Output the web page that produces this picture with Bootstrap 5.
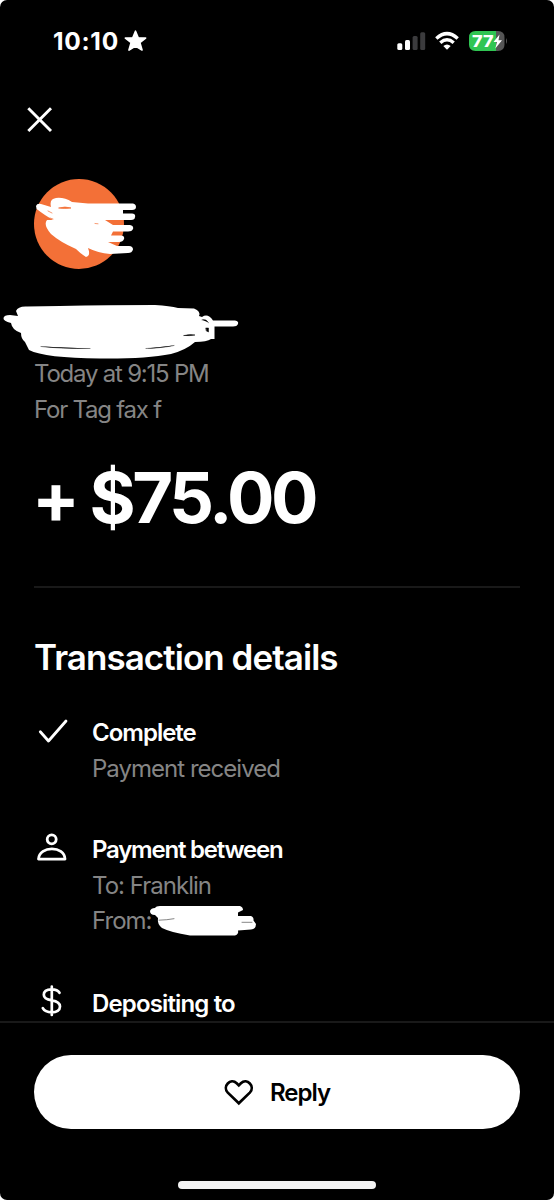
<!DOCTYPE html>
<html lang="en" data-bs-theme="dark">
<head>
<meta charset="utf-8">
<meta name="viewport" content="width=device-width, initial-scale=1">
<title>Transaction details</title>
<link href="https://cdn.jsdelivr.net/npm/bootstrap@5.3.0/dist/css/bootstrap.min.css" rel="stylesheet">
<style>
html{background:#fff;overflow:hidden}
body{background:#fff;margin:0;font-family:Inter,"Liberation Sans",sans-serif;color:#fff}
svg{display:block;overflow:visible;flex:none}
.phone{width:554px;height:1200px;background:#000;border-radius:7px;overflow:hidden}
.status-row{height:84px;padding:0 46px 2px 53px}
.clock{font-size:24.5px;font-weight:700;line-height:30px;letter-spacing:.7px}
.star{margin-left:5px}
.close-row{height:95px;padding:23px 0 0 27px}
.page-body{padding:0 34px;min-height:0}
.avatar-dot{width:90px;height:90px;background:#f37037}
.name-row{height:87px}
.scribble{position:absolute;fill:#fff;stroke:#fff;stroke-linejoin:round;stroke-linecap:round}
.muted-line,.item-title{font-size:24px;line-height:35.7px;white-space:nowrap}
.muted-line{color:#858585;font-weight:400;letter-spacing:-.98px}
.when-line{letter-spacing:-1.22px}
.item-title{font-weight:600;letter-spacing:-1px}
.title-tight{letter-spacing:-1.22px}
.title-loose{letter-spacing:-.85px}
.amount{font-size:70.5px;font-weight:700;line-height:80px;margin-top:31px;margin-left:-2px;letter-spacing:-3.5px;white-space:nowrap}
.rule{height:2px;background:#191919;margin-top:47.5px}
.section-title{font-size:35px;font-weight:600;line-height:50px;letter-spacing:-.95px;margin:44px 0 33px;white-space:nowrap}
.item-row{margin-bottom:45.5px}
.item-row-tall{margin-bottom:47px}
.item-icon{width:58px;margin-top:.3px}
.foot{height:179px;border-top:2px solid #191919;padding:32px 34px 0}
.reply{height:74px;background:#fff;color:#000;font-size:24px;font-weight:600;letter-spacing:-1px;gap:16px}
.reply:hover{background:#fff;color:#000}
.reply-label{padding-top:2px}
.heart{margin-top:1px}
.home-bar{width:198px;height:8px;background:#f3f3f3;margin:52px auto 0}
</style>
</head>
<body>
<main class="phone d-flex flex-column">
  <header class="status-row d-flex align-items-center justify-content-between flex-shrink-0">
    <div class="d-flex align-items-center">
      <span class="clock">10:10</span>
      <svg width="23" height="22" viewBox="0 0 23 22" class="star"><path d="M11.500 1.200 14.200 7.800 21.600 8 15.800 12.600 18 20 11.500 16 5 20 7.200 12.600 1.400 8 8.800 7.800Z" fill="#fff" stroke="#fff" stroke-width="1.700" stroke-linejoin="round"/></svg>
    </div>
    <svg width="111" height="24" viewBox="397 29 111 24">
      <g fill="#fff"><rect x="397.300" y="43.300" width="5" height="6.700" rx="1.500"/><rect x="405" y="40" width="5" height="10" rx="1.500"/></g>
      <g fill="#3b3b3d"><rect x="412.600" y="36" width="5" height="14" rx="1.500"/><rect x="420.200" y="32.300" width="5" height="17.700" rx="1.500"/></g>
      <g fill="none" stroke="#fff" stroke-width="3.400"><path d="M436.300 38.500Q447 28.800 457.700 38.500"/><path d="M440.300 42.800Q447 36.900 453.700 42.800"/></g>
      <path d="M443.300 46Q447 42.900 450.700 46L447 49.800Z" fill="#fff"/>
      <path d="M475.500 31H496V51H475.500Q469 51 469 44.500V37.500Q469 31 475.500 31Z" fill="#30c553"/>
      <path d="M496 31H498Q504.500 31 504.500 37.500V44.500Q504.500 51 498 51H496Z" fill="#555"/>
      <path d="M506 38Q508 41 506 44Z" fill="#555"/>
      <text x="472" y="47" font-size="16.500" font-weight="800" textLength="21.500" lengthAdjust="spacingAndGlyphs" fill="#fff">77</text>
      <path d="M499.500 34.500 493.500 42H497L495.300 48.500 502 40.300H498.500Z" fill="#fff"/>
    </svg>
  </header>
  <div class="close-row flex-shrink-0">
    <svg width="25" height="25" viewBox="0 0 25 25" role="img" aria-label="Close"><path d="M1.300 1.300 24 24M24 1.300 1.300 24" stroke="#fff" stroke-width="2.900"/></svg>
  </div>
  <section class="page-body flex-grow-1 overflow-visible">
    <div class="avatar-dot rounded-circle position-relative">
      <svg class="scribble" style="left:0;top:0" width="104" height="90" viewBox="34 179 104 90">
        <path stroke-width="0" d="M36 206Q37 203 41 204L51 207Q49 199 56 198Q64 197 72 202L88 203.500H133Q136 204 136 207Q136 210 132 210H123V213.500H132Q136 214 135 217Q135 220 131 220H105L113 225H130Q134 226 133 229Q132 231.500 128 231.500H113L111 235.500H121Q125 236 124 239Q123 242 119 242H108L117 246H129Q133 246 133 249.500Q132 253 128 253L110 254Q98 253 88 248Q91 256 86 257Q81 254 76 249Q60 242 51 234Q43 225 47 220L53 220Q43 214 38 210Q36 209 36 206Z"/>
        <path d="M59 208Q65 206 71 208Q64 209 59 208ZM48 211 52 213M50 218 53 219M95 223.500 98 223.800" fill="#f37037" stroke="#f37037" stroke-width=".7"/>
      </svg>
    </div>
    <div class="name-row position-relative">
      <svg class="scribble" style="left:-34px;top:0" width="240" height="86" viewBox="0 269 240 86">
        <path stroke-width="0" d="M16 311Q18 306 27 306.500L60 306Q110 305 155 305Q170 306 178 308L194 308.500Q201 311 199 316L202 317Q208 313 213 320.500H235Q239 321 238 324Q237 326.500 233 326.500H214.500V339H211Q207 342 195 342Q186 350 171 354Q145 359 100 358.500Q45 358 29 350L25 342Q21 339 21 333Q12 330 11 323Q3 321 3.500 318Q4 315 10 315L18 316Z"/>
        <path d="M202 319.800Q206 318.500 208.500 322.500M206 328H208.500V332L206.500 331ZM184 335.500Q190 334 195 335Q190 336 184 335.500ZM41 346.500Q62 348.800 90 348.500M146 348.500Q162 348 174 345.500" fill="#000" stroke="#000" stroke-width=".5"/>
      </svg>
    </div>
    <div class="muted-line when-line">Today at 9:15 PM</div>
    <div class="muted-line when-line">For Tag fax f</div>
    <div class="amount">+ $75.00</div>
    <div class="rule"></div>
    <h1 class="section-title">Transaction details</h1>

    <div class="item-row d-flex">
      <div class="item-icon flex-shrink-0">
        <svg width="36" height="36" viewBox="34 714.500 36 36"><path d="M40.300 731.300 48.500 740.500 66 720.500" fill="none" stroke="#fff" stroke-width="2.800" stroke-linecap="round" stroke-linejoin="round"/></svg>
      </div>
      <div><div class="item-title">Complete</div><div class="muted-line">Payment received</div></div>
    </div>
    <div class="item-row item-row-tall d-flex">
      <div class="item-icon flex-shrink-0">
        <svg width="36" height="36" viewBox="34 831.500 36 36" fill="none" stroke="#fff" stroke-width="2.800" stroke-linejoin="round"><circle cx="51.700" cy="838.800" r="4.500"/><path d="M38.500 858.600C39.500 845 64.500 845 65 858.600Z"/></svg>
      </div>
      <div><div class="item-title title-tight">Payment between</div><div class="muted-line">To: Franklin</div>
        <div class="muted-line position-relative">From:
          <svg class="scribble" style="left:58px;top:0" width="108" height="36" viewBox="150 903 108 36">
            <path stroke-width="0" d="M150 911Q151 908 155 908Q156 906 160 906H240Q243 907 243 910L238 912.500V916H251Q254 917 253.500 920.500L256 924Q256 929 251 929.500L238 930.500Q239 934 235 935.500H190Q170 932 162 928Q157 924 158 918L155 915Q150 915 150 911Z"/>
            <path d="M159 920.200Q167 920 174 918.700M242 922.300H252" fill="none" stroke="#333" stroke-width=".6"/>
          </svg>
        </div></div>
    </div>
    <div class="d-flex">
      <div class="item-icon flex-shrink-0">
        <svg width="36" height="36" viewBox="34 985.500 36 36" fill="none" stroke="#fff" stroke-width="2.700" stroke-linecap="round"><path d="M51.800 986.200V1014.500M59.500 992.300C57.500 989 55 988.800 51.800 988.800C47 988.800 43.800 990.800 43.800 994.300C43.800 998 47.500 999.200 51.800 999.900C56.500 1000.700 60 1002 60 1006C60 1009.800 56.500 1011.800 51.800 1011.800C47.500 1011.800 44.500 1011 42.800 1007.700"/></svg>
      </div>
      <div class="item-title title-loose">Depositing to</div>
    </div>
  </section>
  <footer class="foot flex-shrink-0">
    <button type="button" class="reply btn rounded-pill border-0 w-100 p-0 d-flex align-items-center justify-content-center">
      <svg class="heart" width="30" height="26" viewBox="224.500 1079 30 26"><path d="M239.300 1102.300 228.300 1091.600C222.500 1085.500 231 1076.500 237.200 1082.300L239.300 1084.400 241.400 1082.300C247.600 1076.500 256.100 1085.500 250.300 1091.600Z" fill="none" stroke="#000" stroke-width="2.700"/></svg>
      <span class="reply-label">Reply</span>
    </button>
    <div class="home-bar rounded-pill"></div>
  </footer>
</main>
<script src="https://cdn.jsdelivr.net/npm/bootstrap@5.3.0/dist/js/bootstrap.bundle.min.js"></script>
</body>
</html>
